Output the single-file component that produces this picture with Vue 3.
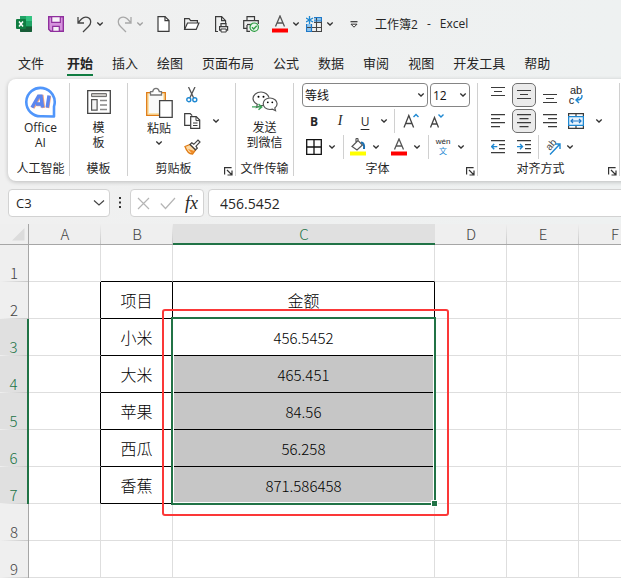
<script setup>
import { h, ref } from 'vue'

const line = 'fill="none" stroke="#3b3b3b" stroke-width="1.2"'
const blue = 'fill="none" stroke="#1e88d2" stroke-width="1.4"'

const icons = {
  excel: [16, 16, `<rect x="4" y="0" width="12" height="16" rx="1" fill="#21a366"/><path d="M4 0h6v5H4z" fill="#21a366"/><path d="M10 0h5a1 1 0 0 1 1 1v4h-6z" fill="#33c481"/><path d="M4 5h6v5H4z" fill="#107c41"/><path d="M10 5h6v5h-6z" fill="#21a366"/><path d="M4 10h12v5a1 1 0 0 1-1 1H5a1 1 0 0 1-1-1z" fill="#185c37"/><path d="M10 10h6v1h-6z" fill="#107c41"/><rect x="0" y="3" width="10" height="10" rx="1" fill="#107c41"/><path d="M3 5.5l4 5M7 5.5l-4 5" stroke="#fff" stroke-width="1.5"/>`],
  save: [16, 16, `<path d="M.7.7h14.6v14.6H2.7L.7 13.3z" fill="#d592dd" stroke="#8f2f9d" stroke-width="1.4"/><path d="M3.7.7h8.6v5.6H3.7z" fill="#f7f2f8" stroke="#8f2f9d" stroke-width="1.2"/><path d="M4.7 15.3v-5h6.6v5z" fill="#f7f2f8" stroke="#8f2f9d" stroke-width="1.2"/>`],
  undo: [15, 17, `<path d="M1 1v6h6M1.3 6.5L4.5 3C8-.3 13.700 1 13.700 6c0 2-.9 3.200-2.200 4.500L6 16" fill="none" stroke="#444" stroke-width="1.300"/>`],
  redo: [15, 17, `<path d="M14 1v6H8M13.700 6.500L10.500 3C7-.3 1.300 1 1.300 6c0 2 .9 3.200 2.200 4.500L9 16" fill="none" stroke="#a8a8a8" stroke-width="1.300"/>`],
  page: [13, 16, `<path d="M1 .6h7l4 4v10.800H1z" fill="#fff" stroke="#3b3b3b" stroke-width="1.200"/><path d="M8 .6v4h4" ${line}/>`],
  open: [18, 16, `<path d="M1.600 13V2.600h4.500l1.500 2h6.800v2.500" ${line}/><path d="M1.600 13.400L4.500 7h11.400l-2.700 6.400z" fill="#fff" stroke="#3b3b3b" stroke-width="1.200"/>`],
  preview: [16, 17, `<path d="M4 15.500H1.600V.7h6l4 4v3" ${line}/><path d="M7.600.7v4h4M7 10.500V7.600h5v2.900" ${line}/><path d="M5.600 10.600h8v3.600h-8z" fill="#f0f0f0" stroke="#3b3b3b" stroke-width="1.200"/><path d="M7 13h5.200v3H7z" fill="#fff" stroke="#3b3b3b"/>`],
  print: [16, 16, `<path d="M4 4.500V.7h7.500v3.800" ${line}/><path d="M4 12.400H.7V4.600h14.600V8" ${line}/><path d="M4 9v6.400h3" ${line}/><path d="M4 8.500h4" ${line}/><circle cx="11.200" cy="11.200" r="4.200" fill="#e9f6ec" stroke="#2f9e44" stroke-width="1.200"/><path d="M9 11.300l1.700 1.700 3-3.300" fill="none" stroke="#2f9e44" stroke-width="1.300"/>`],
  fontRed: [16, 18, `<path d="M3.500 11.500L8 1l4.500 10.500M5 8h6" fill="none" stroke="#555" stroke-width="1.300"/><path d="M0 13.500h16v4H0z" fill="#f00"/>`],
  tableStar: [16, 16, `<path d="M8 1.500h7.500V5H8z" fill="#8cc4ee"/><path d="M.5 8h5v7.500h-5z" fill="#8cc4ee"/><path d="M8 1.500h7.500v14H.5V8M.5 11.500h15M8 6.500h7.500M5.500 8v7.500M10.500 1.500v14" fill="none" stroke="#454545" stroke-width="1.100"/><path d="M8 1.500h7.500V5H8M.5 8v7.500h5V8" fill="none" stroke="#1e78c8" stroke-width="1.100"/><path d="M3.500 0v8M0 2l7 4M7 2L0 6" stroke="#1e88d2" stroke-width="1.300"/>`],
  customize: [8, 7, `<path d="M.5.700h7" stroke="#333" stroke-width="1.200"/><path d="M1 3.200h6L4 6.200z" fill="#fff" stroke="#333"/>`],
  chev: [8, 6, `<path d="M1.300 1.500L4 4l2.700-2.500" fill="none" stroke="#333" stroke-width="1.300"/>`],
  chevGray: [8, 6, `<path d="M1.300 1.500L4 4l2.700-2.500" fill="none" stroke="#a0a0a0" stroke-width="1.300"/>`],
  chevBig: [12, 8, `<path d="M1 1.500L6 6l5-4.500" fill="none" stroke="#444" stroke-width="1.200"/>`],
  ai: [32, 32, `<path d="M29 30.500V20.500A14.200 14.200 0 1 0 17 30.200z" fill="#fff" stroke="#5096fb" stroke-width="2.600" stroke-linejoin="round"/><g fill="none" stroke-width="3.400"><path d="M8 22l6.500-11.500h2.500l1.500 11.500M11.500 18.500h6.500M24.500 10l-1.800 12" stroke="#f2a27c"/><path d="M7 21.500L13.500 10.200h2.500l1.500 11.300M11 18h6M24 9.500L22.200 21.500" stroke="#5c86ee"/></g>`],
  template: [24, 24, `<path d="M.7.700h22.600v22.600H.7z" fill="#fff" stroke="#444" stroke-width="1.300"/><path d="M4.600 3.600h14.800v3H4.600z" fill="#d0cecb" stroke="#666"/><path d="M4.600 9.600h5.500v10.500H4.600z" fill="#f4f4f4" stroke="#555" stroke-width="1.200"/><path d="M13 10.500h7M13 15h7M13 19.500h7" stroke="#888" stroke-width="1.600"/>`],
  paste: [28, 32, `<path d="M1.700 5.600h18.600v22.800H1.700z" fill="#fbe3ae" stroke="#e07b14" stroke-width="1.300"/><path d="M4 7h14v19H4z" fill="#fafafa"/><path d="M5.500 8V4.600h2.200C8 2.500 9.300 1.300 11 1.300s3 1.200 3.300 3.300h2.200V8z" fill="#fff" stroke="#777" stroke-width="1.300"/><path d="M14.600 13.600h12.600v16.800H14.600z" fill="#fff" stroke="#444" stroke-width="1.300"/>`],
  cut: [12, 16, `<path d="M2.500 0l5.200 11M9 0L3.800 11" fill="none" stroke="#555" stroke-width="1.300"/><circle cx="2.800" cy="12.700" r="2" ${blue}/><circle cx="8.800" cy="12.700" r="2" ${blue}/>`],
  copy: [17, 17, `<path d="M6 12.400H.7V.7h5.500l2 2" ${line}/><path d="M6.700 3.600h5.500l3.500 3.500v8.300h-9z" fill="#fff" stroke="#3b3b3b" stroke-width="1.200"/><path d="M12 3.600v4h3.700M9 10h4.500M9 12.500h4.500" fill="none" stroke="#3b3b3b"/>`],
  brush: [17, 16, `<path d="M1 7.500l5-2 5.500 5.500-3 4c-3 0-6-3-7.500-7.500z" fill="#fbd9a5" stroke="#e07b14" stroke-width="1.300"/><path d="M4 10l4 4.500 2.500-2.500z" fill="#f08a24"/><path d="M6 5.500l1.800-1.700 2 1.500L14 1l2 2-4 4.200 1.300 1.900-1.800 1.700z" fill="#fff" stroke="#444" stroke-width="1.200"/>`],
  wechat: [26, 22, `<path d="M11.500 14.500l-3 0-4 2 .8-3.300C2.500 11.800 1 9.900 1 7.600 1 3.900 4.600 1 9 1c4 0 7.400 2.500 8 5.700" fill="none" stroke="#555" stroke-width="1.200"/><path d="M18 7c-4 0-6.800 2.500-6.800 5.800s3 5.700 6.800 5.700c.9 0 1.800-.1 2.500-.4l3 1.600-.7-2.700c1.500-1.100 2.300-2.600 2.300-4.200C25.100 9.500 22 7 18 7z" fill="#fff" stroke="#555" stroke-width="1.200"/><circle cx="6.500" cy="5.800" r="1"/><circle cx="11.500" cy="5.800" r="1"/><circle cx="15.800" cy="11.300" r=".9"/><circle cx="20.300" cy="11.300" r=".9"/><path d="M0 15.900h9M6.500 13l3.300 2.900-3.300 2.900" fill="none" stroke="#3fa35b" stroke-width="1.400"/>`],
  growA: [16, 16, `<path d="M1 14.500L5.800 2.500l4.800 12M2.700 10.500h6.200" fill="none" stroke="#444" stroke-width="1.300"/><path d="M10.500 4l2.500-2.500L15.500 4" ${blue}/>`],
  shrinkA: [16, 16, `<path d="M1.500 14.500l4-10 4 10M3 11h5" fill="none" stroke="#444" stroke-width="1.300"/><path d="M9.500 1.500L12 4l2.500-2.500" ${blue}/>`],
  borders: [16, 16, `<path d="M.7.700h14.600v14.600H.7zM8 .7v14.600M.7 8h14.600" fill="none" stroke="#111" stroke-width="1.300"/>`],
  bucket: [16, 18, `<path d="M2 8.500L8 2.500l4.500 4.500-5.500 5zM8 2.500V1c0-.7-2-.7-2 0v3.500" fill="#fff" stroke="#555" stroke-width="1.200"/><path d="M11 4.500c2.500 0 3.500 2 3 6.500" fill="none" stroke="#1c6fb0" stroke-width="2"/><path d="M0 13.500h16v4H0z" fill="#ff0"/>`],
  alMiddle: [15, 12, `<path d="M0 1.500h14M3 5.500h8M0 9.500h14" ${line}/>`],
  left: [15, 14, `<path d="M0 .6h14M0 4.600h9M0 8.600h14M0 12.600h9" ${line}/>`],
  center: [15, 14, `<path d="M0 .6h14M2.500 4.600h9M0 8.600h14M2.500 12.600h9" ${line}/>`],
  right: [15, 14, `<path d="M0 .6h14M5 4.600h9M0 8.600h14M5 12.600h9" ${line}/>`],
  wrapArrow: [8, 9, `<path d="M6.800 0c.8 3-1 5-5.500 5M4 2L1 5l3 3" ${blue}/>`],
  merge: [16, 16, `<path d="M.6.600h14.800v14.800H.6z" fill="#fff" stroke="#3b3b3b" stroke-width="1.200"/><path d="M8 .6v3M8 12.400v3" ${line}/><path d="M.6 3.600h14.800v8.800H.6z" fill="#e8f3fc" stroke="#1e88d2" stroke-width="1.300"/><path d="M3 8h10M5 6L3 8l2 2M11 6l2 2-2 2" fill="none" stroke="#1e78c8" stroke-width="1.200"/>`],
  outdent: [15, 14, `<path d="M0 .6h14M8 4.600h6M8 8.600h6M0 12.600h14" ${line}/><path d="M.8 6.600h5.500M3.200 4L.7 6.600l2.500 2.600" ${blue}/>`],
  indent: [15, 14, `<path d="M0 .6h14M8 4.600h6M8 8.600h6M0 12.600h14" ${line}/><path d="M0 6.600h5.500M3 4l2.500 2.600L3 9.200" ${blue}/>`],
  orient: [18, 18, `<text font-size="10" fill="#444" font-family="Liberation Sans, sans-serif" transform="translate(6 13) rotate(-50)">ab</text><path d="M6 16.500L15.500 6.500M11 6h5v5" ${blue}/>`],
  launcher: [9, 9, `<path d="M.6 7.500V.6h7M3 3l4.500 4.500M8 3.500v4.500H3.500" fill="none" stroke="#333" stroke-width="1.200"/>`],
  cancel: [13, 13, `<path d="M1 1l11 11M12 1L1 12" stroke="#b5b5b5" stroke-width="1.200"/>`],
  check: [16, 13, `<path d="M.8 6.500l4.700 5L15 1" fill="none" stroke="#b5b5b5" stroke-width="1.200"/>`],
  dots: [3, 12, `<path d="M0 0h2v2H0zM0 4.500h2v2H0zM0 9h2v2H0z" fill="#333"/>`],
  corner: [13, 13, `<path d="M12.500 0v12.500H0z" fill="#dcdcdc"/>`],
}

const Icon = ({ name }) => {
  const [width, height, innerHTML] = icons[name]
  return h('svg', { width, height, viewBox: `0 0 ${width} ${height}`, 'aria-hidden': 'true', innerHTML })
}
Icon.props = ['name']

const tabs = ['文件', '开始', '插入', '绘图', '页面布局', '公式', '数据', '审阅', '视图', '开发工具', '帮助']
const activeTab = ref('开始')

const columns = ['A', 'B', 'C', 'D', 'E', 'F']
const records = {
  2: ['项目', '金额'],
  3: ['小米', '456.5452'],
  4: ['大米', '465.451'],
  5: ['苹果', '84.56'],
  6: ['西瓜', '56.258'],
  7: ['香蕉', '871.586458'],
}
const cellText = (r, c) => (records[r] && (c === 'B' ? records[r][0] : c === 'C' ? records[r][1] : '')) || ''
const rowSelected = (r) => r >= 3 && r <= 7
const cellClass = (r, c) => ({
  'line-right': r >= 2 && r <= 7 && 'ABC'.includes(c),
  'line-bottom': r <= 7 && 'BC'.includes(c),
  label: r === 2 || c === 'B',
  shaded: c === 'C' && r >= 4 && r <= 7,
})
</script>

<template>
  <div class="app">
    <header class="titlebar">
      <span class="brand"><Icon name="excel" /></span>
      <button aria-label="保存"><Icon name="save" /></button>
      <div class="split">
        <button aria-label="撤消"><Icon name="undo" /></button>
        <button aria-label="撤消选项"><Icon name="chev" /></button>
      </div>
      <div class="split">
        <button aria-label="恢复"><Icon name="redo" /></button>
        <button aria-label="恢复选项"><Icon name="chevGray" /></button>
      </div>
      <button aria-label="新建"><Icon name="page" /></button>
      <button aria-label="打开"><Icon name="open" /></button>
      <button aria-label="打印预览"><Icon name="preview" /></button>
      <button aria-label="快速打印"><Icon name="print" /></button>
      <div class="pair">
        <div class="split">
          <button aria-label="字体颜色"><Icon name="fontRed" /></button>
          <button aria-label="字体颜色选项"><Icon name="chev" /></button>
        </div>
        <div class="split">
          <button aria-label="表格"><Icon name="tableStar" /></button>
          <button aria-label="表格选项"><Icon name="chev" /></button>
        </div>
      </div>
      <button class="customize" aria-label="自定义工具栏"><Icon name="customize" /></button>
      <h1 class="title"><span>工作簿2</span><span>-</span><span>Excel</span></h1>
    </header>

    <nav class="tabs">
      <a v-for="t in tabs" :key="t" href="#" :class="{ active: t === activeTab }" @click.prevent="activeTab = t">{{ t }}</a>
    </nav>

    <section class="ribbon">
      <div class="group g-ai">
        <button class="big"><span class="pic"><Icon name="ai" /></span><span>Office<br />AI</span></button>
        <div class="caption"><span>人工智能</span></div>
      </div>
      <div class="group g-narrow">
        <button class="big"><span class="pic"><Icon name="template" /></span><span>模<br />板</span></button>
        <div class="caption"><span>模板</span></div>
      </div>
      <div class="group g-clip">
        <div class="clip">
          <button class="big paste"><span class="pic"><Icon name="paste" /></span><span>粘贴</span><Icon name="chev" /></button>
          <div class="rows">
            <div class="row"><button class="tool" aria-label="剪切"><Icon name="cut" /></button></div>
            <div class="row">
              <button class="tool" aria-label="复制"><Icon name="copy" /></button>
              <button class="drop far" aria-label="复制选项"><Icon name="chev" /></button>
            </div>
            <div class="row"><button class="tool" aria-label="格式刷"><Icon name="brush" /></button></div>
          </div>
        </div>
        <div class="caption"><span>剪贴板</span><button aria-label="剪贴板设置"><Icon name="launcher" /></button></div>
      </div>
      <div class="group g-narrow">
        <button class="big"><span class="pic"><Icon name="wechat" /></span><span>发送<br />到微信</span></button>
        <div class="caption"><span>文件传输</span></div>
      </div>
      <div class="group g-font">
        <div class="rows">
          <div class="row tight">
            <label class="combo family"><select aria-label="字体"><option>等线</option></select><Icon name="chev" /></label>
            <label class="combo size"><select aria-label="字号"><option>12</option></select><Icon name="chev" /></label>
          </div>
          <div class="row tight">
            <button class="tool bold">B</button>
            <button class="tool italic">I</button>
            <div class="under"><button class="tool underline">U</button><button class="drop" aria-label="下划线选项"><Icon name="chev" /></button></div>
            <i class="sep"></i>
            <button class="tool grow" aria-label="增大字号"><Icon name="growA" /></button>
            <button class="tool shrink" aria-label="减小字号"><Icon name="shrinkA" /></button>
          </div>
          <div class="row loose">
            <div class="menu"><button class="tool" aria-label="边框"><Icon name="borders" /></button><button class="drop" aria-label="边框选项"><Icon name="chev" /></button></div>
            <i class="sep"></i>
            <div class="menu"><button class="tool" aria-label="填充颜色"><Icon name="bucket" /></button><button class="drop" aria-label="填充颜色选项"><Icon name="chev" /></button></div>
            <div class="menu"><button class="tool" aria-label="字体颜色"><Icon name="fontRed" /></button><button class="drop" aria-label="字体颜色选项"><Icon name="chev" /></button></div>
            <i class="sep"></i>
            <div class="menu"><button class="tool phonetic"><span>wén</span><span class="wen">文</span></button><button class="drop" aria-label="拼音选项"><Icon name="chev" /></button></div>
          </div>
        </div>
        <div class="caption"><span>字体</span><button aria-label="字体设置"><Icon name="launcher" /></button></div>
      </div>
      <div class="group g-align">
        <div class="rows">
          <div class="row tight">
            <button class="tool high" aria-label="顶端对齐"><Icon name="alMiddle" /></button>
            <button class="tool on" aria-label="垂直居中"><Icon name="alMiddle" /></button>
            <button class="tool low" aria-label="底端对齐"><Icon name="alMiddle" /></button>
            <button class="tool wrap"><span>ab</span><span class="wrap-line">c<Icon name="wrapArrow" /></span></button>
          </div>
          <div class="row tight">
            <button class="tool" aria-label="左对齐"><Icon name="left" /></button>
            <button class="tool on" aria-label="居中"><Icon name="center" /></button>
            <button class="tool" aria-label="右对齐"><Icon name="right" /></button>
            <button class="tool" aria-label="合并后居中"><Icon name="merge" /></button>
            <button class="drop mid" aria-label="合并选项"><Icon name="chev" /></button>
          </div>
          <div class="row tight">
            <button class="tool" aria-label="减少缩进量"><Icon name="outdent" /></button>
            <button class="tool" aria-label="增加缩进量"><Icon name="indent" /></button>
            <i class="sep"></i>
            <div class="menu"><button class="tool" aria-label="方向"><Icon name="orient" /></button><button class="drop slim" aria-label="方向选项"><Icon name="chev" /></button></div>
          </div>
        </div>
        <div class="caption"><span>对齐方式</span><button aria-label="对齐设置"><Icon name="launcher" /></button></div>
      </div>
    </section>

    <section class="formula-bar">
      <div class="namebox">
        <input aria-label="名称框" value="C3" />
        <button aria-label="名称列表"><Icon name="chevBig" /></button>
      </div>
      <Icon name="dots" class="dots" />
      <div class="actions">
        <button aria-label="取消"><Icon name="cancel" /></button>
        <button aria-label="输入"><Icon name="check" /></button>
        <button class="fx">fx</button>
      </div>
      <input class="formula" aria-label="编辑栏" value="456.5452" />
    </section>

    <main class="sheet">
      <table>
        <colgroup>
          <col class="c-head" />
          <col v-for="c in columns" :key="c" :class="c === 'C' ? 'c-wide' : 'c-std'" />
        </colgroup>
        <thead>
          <tr>
            <th class="corner"><Icon name="corner" /></th>
            <th v-for="c in columns" :key="c" :class="{ picked: c === 'C' }">{{ c }}</th>
          </tr>
        </thead>
        <tbody>
          <tr v-for="r in 9" :key="r">
            <th :class="{ picked: rowSelected(r) }">{{ r }}</th>
            <td v-for="c in columns" :key="c" :class="cellClass(r, c)">{{ cellText(r, c) }}</td>
          </tr>
        </tbody>
      </table>
      <div class="selection"><i class="handle"></i></div>
      <div class="callout"></div>
    </main>
  </div>
</template>

<style>
body {
  margin: 0;
  background: #fff;
  overflow: hidden;
}
</style>

<style scoped>
.app {
  height: 100vh;
  display: flex;
  flex-direction: column;
  overflow: hidden;
  background: linear-gradient(90deg, #f0f0f0, #eef1f1);
  color: #262626;
  font-family: "Open Sans", "Noto Sans CJK SC", sans-serif;
  font-size: 12px;
}
.app * {
  box-sizing: border-box;
}
svg {
  display: block;
  flex: none;
}
button {
  padding: 0;
  border: 0;
  background: none;
  color: inherit;
  font: inherit;
}
.titlebar {
  display: flex;
  align-items: center;
  gap: 13px;
  flex: none;
  height: 48px;
  padding-left: 16px;
}
.brand {
  width: 19px;
}
.split {
  display: flex;
  align-items: center;
  gap: 4px;
}
.pair {
  display: flex;
  gap: 6px;
}
.customize {
  padding: 0 4px 0 3px;
}
.title {
  display: flex;
  gap: 9px;
  margin: 0;
  font-size: 12px;
  font-weight: 400;
  white-space: nowrap;
}
.tabs {
  display: flex;
  gap: 19px;
  flex: none;
  height: 31px;
  padding-left: 18px;
  font-size: 13px;
}
.tabs a {
  height: 28px;
  padding-top: 5px;
  line-height: 20px;
  color: #262626;
  text-decoration: none;
  white-space: nowrap;
}
.tabs a:first-child {
  margin-right: 4px;
}
.tabs .active {
  border-bottom: 2px solid #107c41;
  font-weight: 700;
}
.ribbon {
  display: flex;
  flex: none;
  margin: 0 -12px 0 8px;
  padding: 4px 0 5px;
  border-radius: 8px;
  background: #fff;
  box-shadow: 0 1px 4px rgba(0, 0, 0, 0.22);
}
.group {
  display: flex;
  flex-direction: column;
  justify-content: space-between;
  flex: none;
  height: 93px;
  border-right: 1px solid #d0d0d0;
}
.g-ai {
  width: 62px;
  padding-left: 4px;
}
.g-narrow {
  width: 58px;
}
.g-clip {
  width: 108px;
}
.g-font {
  width: 184px;
}
.g-align {
  width: 142px;
}
.g-font .rows,
.g-align .rows {
  padding-left: 8px;
}
.big {
  display: flex;
  flex-direction: column;
  align-items: center;
  gap: 2px;
  padding-top: 3px;
  line-height: 15px;
}
.pic {
  display: grid;
  place-items: center;
  height: 32px;
}
.caption {
  display: flex;
  align-items: center;
  height: 15px;
  line-height: 15px;
  white-space: nowrap;
}
.caption span {
  flex: 1;
  display: flex;
  justify-content: center;
}
.caption button {
  width: 16px;
  padding: 5px 0 0 5px;
}
.clip {
  display: flex;
}
.paste {
  width: 52px;
  margin-left: 5px;
  padding-top: 4px;
}
.paste > svg {
  margin-top: 2px;
}
.rows {
  display: flex;
  flex-direction: column;
  gap: 2px;
}
.row {
  display: flex;
  align-items: center;
  height: 24px;
}
.clip .row {
  margin-left: -5px;
}
.tight {
  gap: 2px;
}
.loose {
  gap: 5px;
}
.loose .sep {
  margin-right: -3px;
}
.tool {
  display: grid;
  place-items: center;
  width: 24px;
  height: 24px;
}
.menu,
.under {
  display: flex;
}
.drop {
  display: grid;
  place-items: center;
  width: 12px;
  height: 24px;
}
.under .tool {
  width: 22px;
}
.under .drop {
  width: 16px;
}
.drop.far {
  margin-left: 6px;
}
.drop.mid {
  margin-left: 3px;
}
.drop.slim {
  width: 9px;
}
.sep {
  width: 1px;
  height: 24px;
  background: #d0d0d0;
}
.tool.grow {
  width: 28px;
}
.tool.shrink {
  width: 20px;
}
.bold {
  font-weight: 700;
}
.italic {
  font-family: "Liberation Serif", serif;
  font-size: 14px;
  font-style: italic;
}
.underline {
  text-decoration: underline;
  text-underline-offset: 3px;
}
.on {
  border: 1px solid #707070;
  border-radius: 5px;
  background: #ebebeb;
}
.high {
  align-items: start;
  padding-top: 3px;
}
.low {
  align-items: end;
  padding-bottom: 2px;
}
.phonetic {
  align-content: center;
  font-family: "Liberation Sans", "Noto Sans CJK SC", sans-serif;
  font-size: 8px;
  line-height: 9px;
}
.wen {
  height: 12px;
  color: #1e88d2;
  line-height: 12px;
}
.wrap {
  align-content: center;
  font-family: "Liberation Sans", sans-serif;
  font-size: 11px;
  line-height: 10px;
}
.wrap-line {
  display: flex;
  gap: 1px;
}
.combo {
  display: flex;
  align-items: center;
  height: 24px;
  padding: 0 2px;
  border: 1px solid #858585;
  border-radius: 4px;
  background: #fff;
}
.family {
  width: 126px;
}
.size {
  width: 40px;
}
.combo select {
  flex: 1;
  width: 0;
  padding: 0;
  border: 0;
  appearance: none;
  background: none;
  color: #111;
  font: inherit;
}
.formula-bar {
  display: flex;
  align-items: center;
  flex: none;
  padding: 8px 0 7px 8px;
}
.namebox,
.actions,
.formula {
  height: 28px;
  border: 1px solid #d2d2d2;
  border-radius: 4px;
  background: #fff;
}
.namebox {
  display: flex;
  align-items: center;
  width: 102px;
  padding: 0 4px 0 7px;
}
.namebox input {
  flex: 1;
  min-width: 0;
  padding: 0;
  border: 0;
  background: none;
  color: #262626;
  font: inherit;
  font-size: 13px;
}
.dots {
  margin: 0 8px 0 9px;
}
.actions {
  display: flex;
  align-items: center;
  justify-content: space-between;
  width: 74px;
  padding: 0 5px 0 6px;
}
.fx {
  font-family: "Liberation Serif", serif;
  font-size: 18px;
  font-style: italic;
  font-weight: 400;
  line-height: 20px;
}
.formula {
  flex: 1;
  min-width: 0;
  margin: 0 -4px 0 4px;
  padding: 0 11px;
  color: #262626;
  font: inherit;
  font-size: 14px;
}
.sheet {
  position: relative;
  flex: 1;
  overflow: hidden;
  background: #fff;
  font-family: "Noto Sans CJK SC", sans-serif;
}
table {
  width: 651px;
  table-layout: fixed;
  border-collapse: separate;
  border-spacing: 0;
}
.c-head {
  width: 29px;
}
.c-std {
  width: 72px;
}
.c-wide {
  width: 262px;
}
th {
  padding: 0;
  background: #efefef;
  color: #444;
  font-size: 15px;
  font-weight: 300;
}
thead th {
  height: 21px;
  border-bottom: 1px solid #a6a6a6;
  background: linear-gradient(#efefef, #c8c8c8) right / 1px 100% no-repeat #efefef;
  line-height: 20px;
}
thead .picked {
  border-bottom: 2px solid #217346;
  background: #e0e0e0;
  line-height: 19px;
}
thead .corner {
  border-right: 1px solid #a6a6a6;
  background: #efefef;
}
.corner svg {
  margin-left: 12px;
}
tbody th {
  height: 37px;
  border-right: 1px solid #a6a6a6;
  background: linear-gradient(90deg, #efefef, #c8c8c8) bottom / 100% 1px no-repeat #efefef;
  line-height: 18px;
  vertical-align: bottom;
}
tbody .picked {
  border-right: 2px solid #217346;
  background-color: #e0e0e0;
}
.picked {
  color: #217346;
}
td {
  height: 37px;
  padding: 2px 0 0;
  border-right: 1px solid #dedede;
  border-bottom: 1px solid #dedede;
  color: #000;
  font-size: 15px;
  font-weight: 300;
  line-height: 20px;
  text-align: center;
}
.label {
  padding-top: 0;
  font-size: 16px;
}
.shaded {
  background: #c6c6c6;
}
.line-right {
  border-right-color: #000;
}
.line-bottom {
  border-bottom-color: #000;
}
.selection {
  position: absolute;
  top: 93px;
  left: 171px;
  width: 265px;
  height: 188px;
  border: 2px solid #217346;
  box-shadow: inset 0 0 0 1px #fff;
}
.handle {
  position: absolute;
  right: -4px;
  bottom: -4px;
  width: 7px;
  height: 7px;
  border: 1px solid #fff;
  background: #217346;
}
.callout {
  position: absolute;
  top: 85px;
  left: 162px;
  width: 287px;
  height: 207px;
  border: 2px solid #fb3838;
  border-radius: 3px;
}
</style>
